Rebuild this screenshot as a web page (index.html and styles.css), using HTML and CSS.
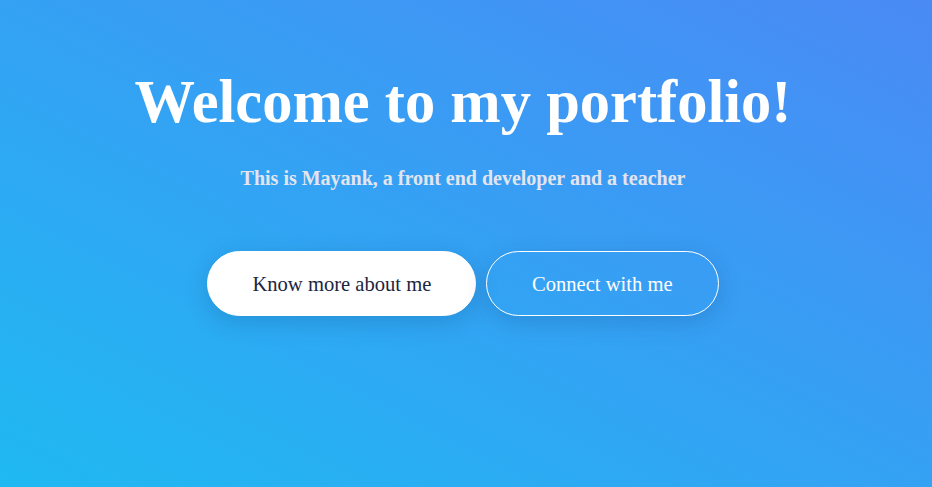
FILE: index.html
```html
<!DOCTYPE html>
<html>
<head>
<meta charset="utf-8">
<link rel="stylesheet" href="styles.css">
</head>
<body>
<main class="hero">
  <h1 class="title">Welcome to my portfolio!</h1>
  <p class="subtitle">This is Mayank, a front end developer and a teacher</p>
  <div class="actions">
    <a class="btn btn-primary" href="#">Know more about me</a>
    <a class="btn btn-outline" href="#">Connect with me</a>
  </div>
</main>
</body>
</html>
```
FILE: styles.css
```css
html, body {
  margin: 0;
  height: 100%;
}
body {
  font-family: "Liberation Serif", "Times New Roman", serif;
  background: linear-gradient(to top right, #1fb9f2, #4a8af5);
  overflow: hidden;
}
.hero {
  display: flex;
  flex-direction: column;
  align-items: center;
  padding: 62px 6px 0 0;
}
.title {
  margin: 0;
  font-size: 60.5px;
  line-height: 80px;
  font-weight: bold;
  color: #ffffff;
}
.subtitle {
  margin: 24px 0 0;
  font-size: 20px;
  line-height: 24px;
  font-weight: bold;
  color: #e3e5ee;
}
.actions {
  display: flex;
  gap: 10px;
  margin-top: 61px;
}
.btn {
  display: block;
  height: 65px;
  box-sizing: border-box;
  line-height: 65px;
  border-radius: 33px;
  font-size: 20.6px;
  text-decoration: none;
  box-shadow: 0 6px 24px rgba(0, 40, 90, 0.18);
}
.btn-primary {
  padding: 0 43.5px 0 44px;
  background: #ffffff;
  color: #1c2541;
  border: 1px solid #ffffff;
}
.btn-outline {
  padding: 0 45px;
  background: transparent;
  color: #ffffff;
  border: 1px solid #ffffff;
}
```
